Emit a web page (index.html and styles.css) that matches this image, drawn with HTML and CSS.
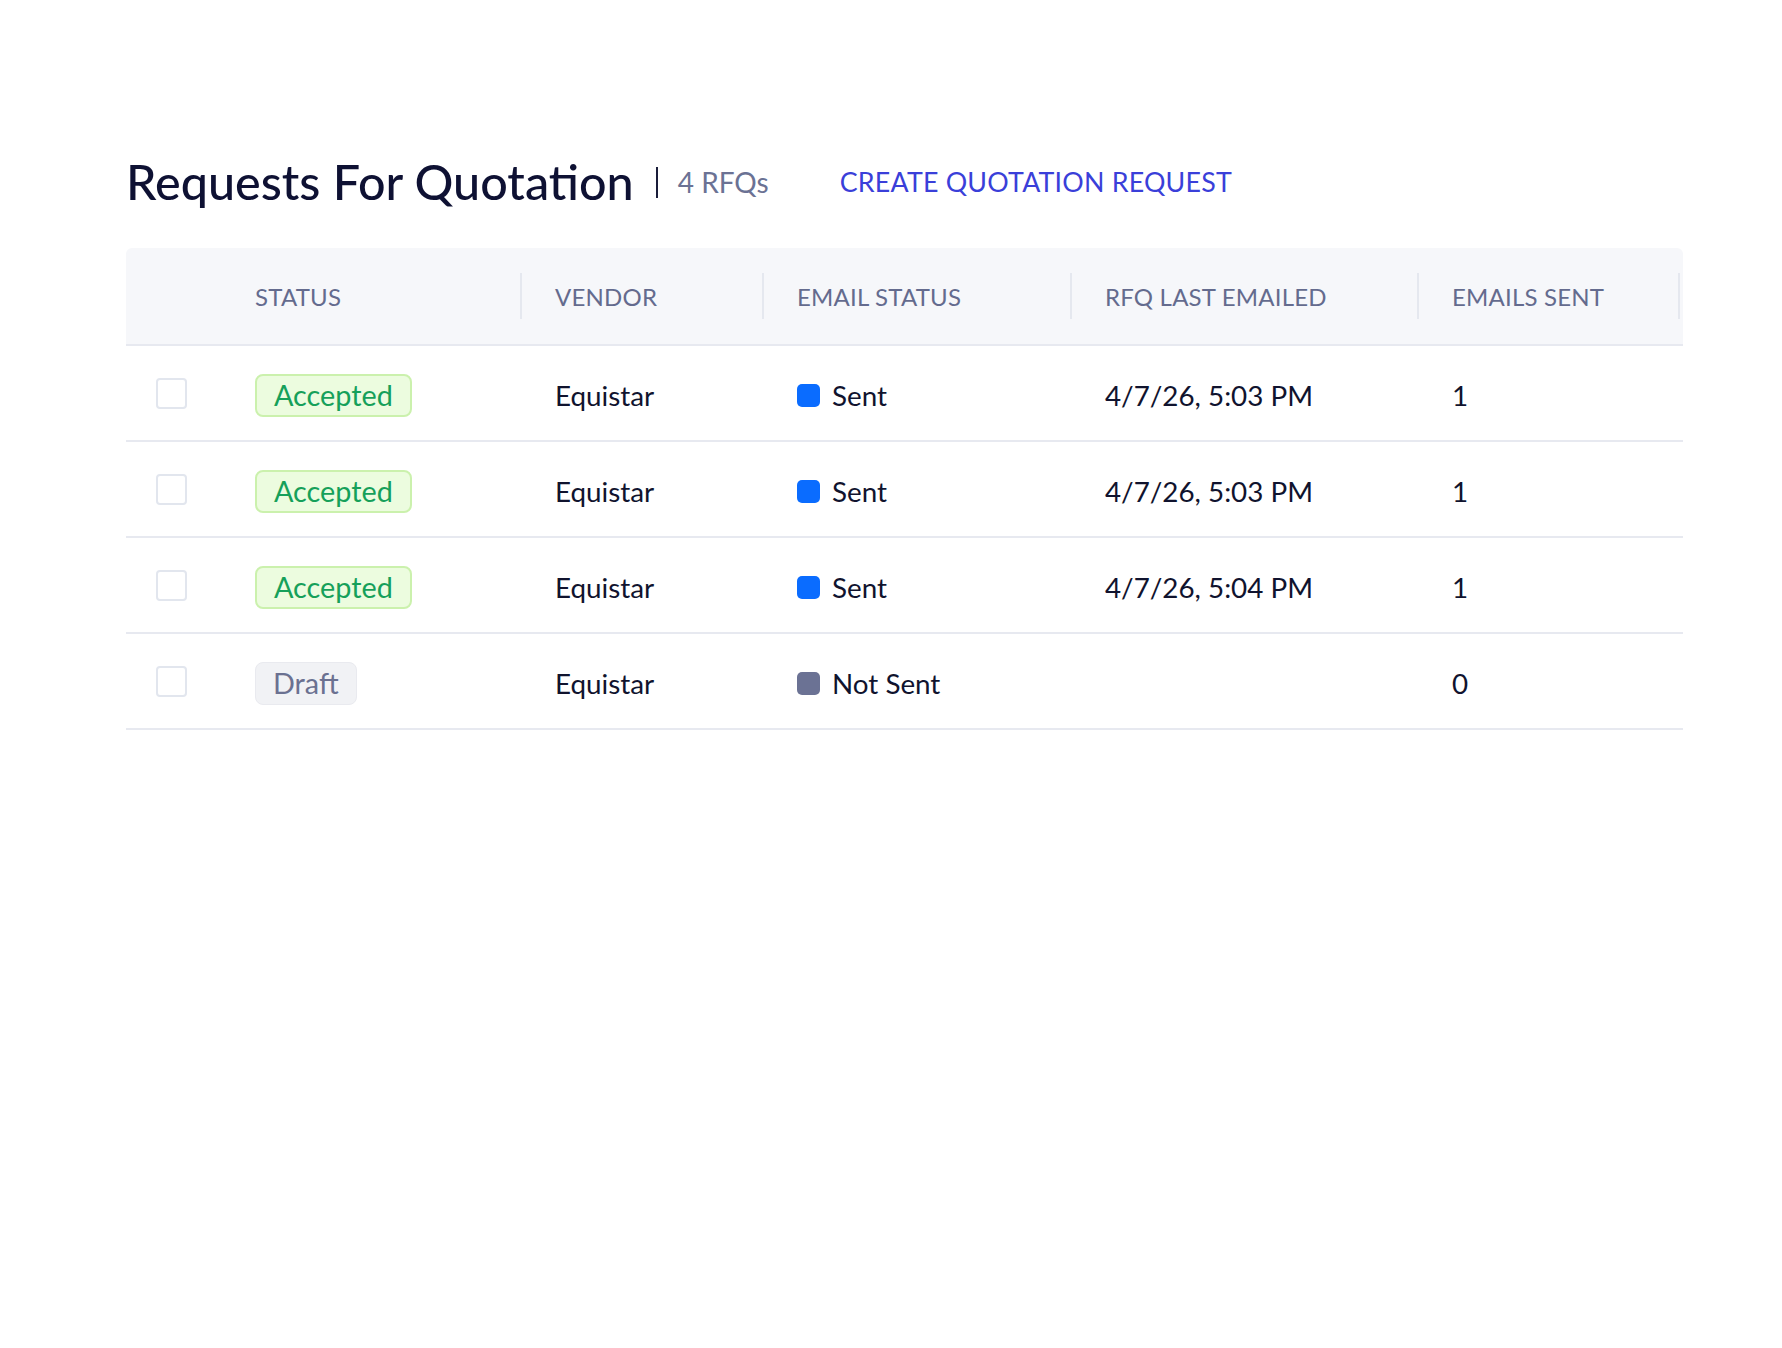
FILE: index.html
```html
<!DOCTYPE html>
<html>
<head>
<meta charset="utf-8">
<link rel="stylesheet" href="styles.css">
</head>
<body>
<div class="page">
  <div class="title-row">
    <h1 class="title">Requests For Quotation</h1>
    <span class="sep"></span>
    <span class="count">4 RFQs</span>
    <a class="create">CREATE QUOTATION REQUEST</a>
  </div>
  <div class="table">
    <div class="row head">
      <div class="cell chk"></div>
      <div class="cell hc">STATUS</div>
      <div class="cell hc">VENDOR</div>
      <div class="cell hc">EMAIL STATUS</div>
      <div class="cell hc">RFQ LAST EMAILED</div>
      <div class="cell hc">EMAILS SENT</div>
      <div class="cell rest"></div>
    </div>
    <div class="row">
      <div class="cell chk"><span class="box"></span></div>
      <div class="cell"><span class="badge ok">Accepted</span></div>
      <div class="cell">Equistar</div>
      <div class="cell"><span class="dot sent"></span>Sent</div>
      <div class="cell">4/7/26, 5:03 PM</div>
      <div class="cell">1</div>
      <div class="cell rest"></div>
    </div>
    <div class="row">
      <div class="cell chk"><span class="box"></span></div>
      <div class="cell"><span class="badge ok">Accepted</span></div>
      <div class="cell">Equistar</div>
      <div class="cell"><span class="dot sent"></span>Sent</div>
      <div class="cell">4/7/26, 5:03 PM</div>
      <div class="cell">1</div>
      <div class="cell rest"></div>
    </div>
    <div class="row">
      <div class="cell chk"><span class="box"></span></div>
      <div class="cell"><span class="badge ok">Accepted</span></div>
      <div class="cell">Equistar</div>
      <div class="cell"><span class="dot sent"></span>Sent</div>
      <div class="cell">4/7/26, 5:04 PM</div>
      <div class="cell">1</div>
      <div class="cell rest"></div>
    </div>
    <div class="row">
      <div class="cell chk"><span class="box"></span></div>
      <div class="cell"><span class="badge draft">Draft</span></div>
      <div class="cell">Equistar</div>
      <div class="cell"><span class="dot notsent"></span>Not Sent</div>
      <div class="cell"></div>
      <div class="cell">0</div>
      <div class="cell rest"></div>
    </div>
  </div>
</div>
</body>
</html>
```

FILE: styles.css
```css
* { box-sizing: border-box; }
html, body { margin: 0; padding: 0; background: #ffffff; }
body {
  font-family: Lato, "Noto Sans", sans-serif;
  color: #0f1230;
}
.page {
  padding: 148px 99px 0 126px;
}
.title-row {
  display: flex;
  align-items: center;
  height: 66px;
  margin-bottom: 34px;
}
.title {
  margin: 0;
  font-size: 48.5px;
  font-weight: 500;
  color: #0e1133;
  letter-spacing: 0;
}
.sep {
  width: 2px;
  height: 31px;
  background: #1a1d3a;
  margin: 2px 20px 0 22px;
}
.count {
  font-size: 28px;
  color: #6b7294;
  margin-top: 2px;
}
.create {
  margin-left: 71px;
  margin-top: 2px;
  font-size: 26.8px;
  color: #3a3fd9;
  letter-spacing: 0.2px;
}
.table {
  width: 1557px;
}
.row {
  display: grid;
  grid-template-columns: 95px 300px 242px 308px 347px 261px 4px;
  height: 96px;
  border-bottom: 2px solid #e7e9f0;
  align-items: center;
  font-size: 27.8px;
  color: #10132e;
}
.row.head {
  background: #f6f7fa;
  border-radius: 6px 6px 0 0;
  height: 98px;
}
.cell {
  display: flex;
  align-items: center;
  padding-left: 34px;
  padding-top: 4px;
  height: 100%;
  position: relative;
  white-space: nowrap;
}
.head .cell { padding-top: 0; }
.cell.chk { padding-left: 30px; padding-top: 0; }
.cell.rest { padding: 0; }
.hc {
  font-size: 24px;
  color: #646b8e;
  letter-spacing: 0.2px;
}
.hc::after {
  content: "";
  position: absolute;
  right: -1px;
  top: 25px;
  bottom: 25px;
  width: 2px;
  background: #e5e8ef;
}
.box {
  width: 31px;
  height: 31px;
  border: 2px solid #e2e6ee;
  border-radius: 4px;
  background: #fff;
}
.badge {
  display: inline-flex;
  align-items: center;
  height: 43px;
  padding: 0 17px 0 17px;
  border-radius: 8px;
  font-size: 28.8px;
}
.badge.ok {
  background: #ecfcdf;
  border: 2px solid #cbf1ad;
  color: #16a05a;
}
.badge.draft {
  background: #f1f2f5;
  border: 1px solid #e9eaef;
  color: #6b7191;
}
.dot {
  width: 23px;
  height: 23px;
  border-radius: 5px;
  margin-right: 12px;
}
.dot.sent { background: #0a6cff; }
.dot.notsent { background: #6b7294; }
```
